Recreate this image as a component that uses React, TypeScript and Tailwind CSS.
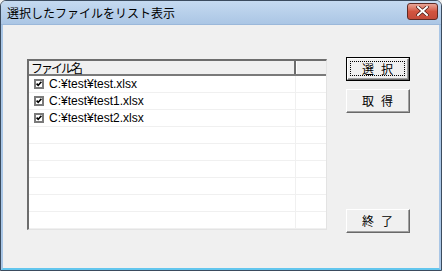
import React from "react";

const JP = { fontFamily: '"Noto Sans CJK JP", sans-serif' };
const LATIN = { fontFamily: '"Liberation Sans", "Noto Sans CJK JP", sans-serif' };

const files = ["C:¥test¥test.xlsx", "C:¥test¥test1.xlsx", "C:¥test¥test2.xlsx"];

function CheckBox() {
  return (
    <svg width="10" height="10" viewBox="0 0 10 10" className="shrink-0">
      <rect x="1" y="1" width="8" height="8" fill="#fff" stroke="#7a7a7a" strokeWidth="2" />
      <path d="M2.6 4.6 L4.2 6.4 L7.4 2.8" fill="none" stroke="#000" strokeWidth="1.6" />
    </svg>
  );
}

function Button({ label, isDefault = false, className = "" }: { label: string[]; isDefault?: boolean; className?: string }) {
  return (
    <div className={`w-[64px] h-[24px] ${isDefault ? "border border-black" : ""} ${className}`}>
      <div className="w-full h-full border-t border-l border-white border-r border-b border-r-[#696969] border-b-[#696969] bg-[#f0f0f0]">
        <div className="w-full h-full border-r border-b border-r-[#a0a0a0] border-b-[#a0a0a0] flex items-center justify-center p-[2px]">
          <div
            className={`w-full h-full flex items-center justify-center gap-[7px] text-[12px] leading-none text-black ${isDefault ? "border border-dotted border-black" : ""}`}
            style={JP}
          >
            {label.map((c) => (
              <span key={c}>{c}</span>
            ))}
          </div>
        </div>
      </div>
    </div>
  );
}

export default function App() {
  return (
    <div className="w-[442px] h-[271px] bg-[#f0f0f0]">
      <div className="w-full h-full flex flex-col border border-[#3b4b5e] rounded-t-[6px] overflow-hidden">
        {/* Title bar */}
        <div className="h-[24px] shrink-0 flex items-center justify-between bg-gradient-to-b from-[#c5daf0] to-[#abc6e5] border-b border-[#9bb8da] pl-[6px] pr-[3px]">
          <span className="text-[12px] text-black leading-none" style={JP}>
            選択したファイルをリスト表示
          </span>
          <div className="w-[31px] h-[17px] mb-[3px] rounded-[3px] border border-[#5e2a24] bg-gradient-to-b from-[#e8a598] via-[#d2543f] to-[#c44b3a] flex items-center justify-center">
            <svg width="13" height="10" viewBox="0 0 13 10">
              <path d="M2 1 L11 9 M11 1 L2 9" stroke="#4a1a16" strokeWidth="3.4" strokeLinecap="square" />
              <path d="M2 1 L11 9 M11 1 L2 9" stroke="#fff" strokeWidth="2" strokeLinecap="square" />
            </svg>
          </div>
        </div>

        {/* Client area */}
        <div className="flex-1 flex border-l-2 border-r-2 border-b-2 border-[#a9c6e6] border-b-[#62c6ee] pl-[24px] pt-[34px]">
          {/* List view */}
          <div className="w-[300px] h-[171px] border-t-2 border-l-2 border-t-[#6d6d6d] border-l-[#6d6d6d] border-r border-b border-r-[#e3e3e3] border-b-[#e3e3e3] bg-white flex flex-col">
            <div className="h-[15px] flex border-b-2 border-[#7a7a7a] bg-[#f0f0f0]">
              <div className="w-[267px] border-r-2 border-[#6d6d6d] flex items-center pl-[2px]">
                <span className="text-[12px] leading-none text-black tracking-[-2px]" style={JP}>
                  ファイル名
                </span>
              </div>
              <div className="flex-1 border-l border-white" />
            </div>
            {Array.from({ length: 9 }).map((_, i) => (
              <div key={i} className="h-[17px] flex border-b border-[#f0f0f0]">
                <div className="w-[267px] border-r border-[#f0f0f0] flex items-center pl-[5px] gap-[5px]">
                  {files[i] && (
                    <>
                      <CheckBox />
                      <span className="text-[12px] leading-none text-black" style={LATIN}>
                        {files[i]}
                      </span>
                    </>
                  )}
                </div>
                <div className="flex-1" />
              </div>
            ))}
          </div>

          {/* Buttons */}
          <div className="ml-[19px] -mt-[2px] flex flex-col">
            <Button label={["選", "択"]} isDefault />
            <Button label={["取", "得"]} className="mt-[8px]" />
            <Button label={["終", "了"]} className="mt-[96px]" />
          </div>
        </div>
      </div>
    </div>
  );
}
